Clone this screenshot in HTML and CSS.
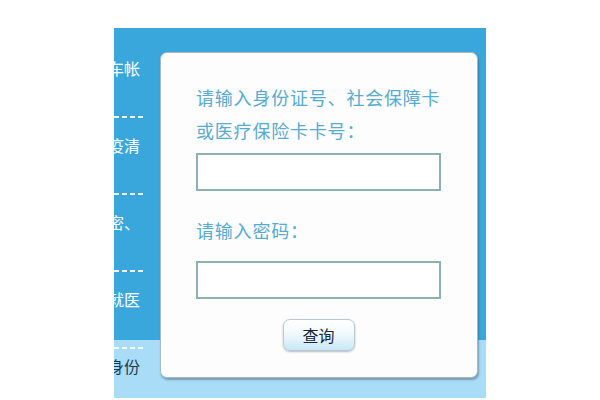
FILE: index.html
```html
<!DOCTYPE html>
<html lang="zh-CN">
<head>
  <meta charset="UTF-8">
  <meta name="viewport" content="width=device-width, initial-scale=1.0">
  <title>社保查询</title>
  <link rel="stylesheet" href="styles.css">
</head>
<body>

  <div class="frame">
    <!-- Left menu, cut off by the screenshot -->
    <div class="side">
      <div class="side-item"><span>车帐</span></div>
      <div class="side-item"><span>疫清</span></div>
      <div class="side-item"><span>密、</span></div>
      <div class="side-item"><span>就医</span></div>
      <div class="side-item last"><span>身份</span></div>
    </div>

    <!-- Login card -->
    <div class="card">
      <div class="label">请输入身份证号、社会保障卡<br>或医疗保险卡卡号：</div>
      <input type="text" class="field">

      <div class="label second">请输入密码：</div>
      <input type="password" class="field">

      <div class="actions">
        <button class="query-button">查询</button>
      </div>
    </div>
  </div>

</body>
</html>
```

FILE: styles.css
```css
/* Basic reset */
* {
  margin: 0;
  padding: 0;
  box-sizing: border-box;
  font-family: "Noto Sans CJK SC", "Liberation Sans", sans-serif;
}

body {
  background-color: #ffffff;
  width: 600px;
  height: 400px;
  overflow: hidden;
}

.frame {
  display: flex;
  width: 372px;
  height: 370px;
  margin: 28px 0 0 114px;
  background: linear-gradient(to bottom, #3aa7dc 0, #3aa7dc 312px, #a8dcf7 312px, #a8dcf7 100%);
}

/* Sidebar */
.side {
  width: 46px;
  overflow: hidden;
  padding-top: 13px;
}

.side-item {
  display: flex;
  justify-content: flex-end; /* lets the text overflow to the left */
  height: 77px;
  padding: 17px 20px 0 0;
  font-size: 16px;
  line-height: 20px;
  color: #ffffff;
  position: relative;
}

/* dashed divider under each menu item */
.side-item::after {
  content: "";
  position: absolute;
  left: 0;
  bottom: 0;
  width: 30px;
  height: 2px;
  background: repeating-linear-gradient(to right, rgba(255, 255, 255, 0.9) 0, rgba(255, 255, 255, 0.9) 5px, transparent 5px, transparent 8px);
}

.side-item span {
  flex-shrink: 0;
  white-space: nowrap;
}

.side-item.last {
  padding-top: 7px;
  color: #1c3b52;
}

.side-item.last::after {
  display: none;
}

/* Card */
.card {
  width: 318px;
  height: 326px;
  margin-top: 24px;
  padding: 28px 0 0 35px;
  background-color: #fdfdfd;
  border: 1px solid #a9b9c2;
  border-radius: 7px;
  box-shadow: 1px 2px 2px rgba(60, 80, 95, 0.45);
}

.label {
  font-size: 18px;
  line-height: 33px;
  letter-spacing: 0.8px;
  color: #55abd1;
}

.label.second {
  margin-top: 23px;
}

.field {
  display: block;
  width: 245px;
  height: 38px;
  margin-top: 6px;
  border: 2px solid #8db0b5;
  background-color: #ffffff;
  outline: none;
}

.label.second + .field {
  margin-top: 14px;
}

.actions {
  width: 245px;
  display: flex;
  justify-content: center;
  margin-top: 20px;
}

.query-button {
  width: 72px;
  height: 32px;
  font-size: 16px;
  color: #18293a;
  background: linear-gradient(to bottom, #ffffff 0%, #f2f9fd 45%, #c9e7f7 100%);
  border: 1px solid #b9c9d2;
  border-radius: 7px;
  box-shadow: 0 1px 2px rgba(90, 110, 125, 0.45);
  cursor: pointer;
}
```
